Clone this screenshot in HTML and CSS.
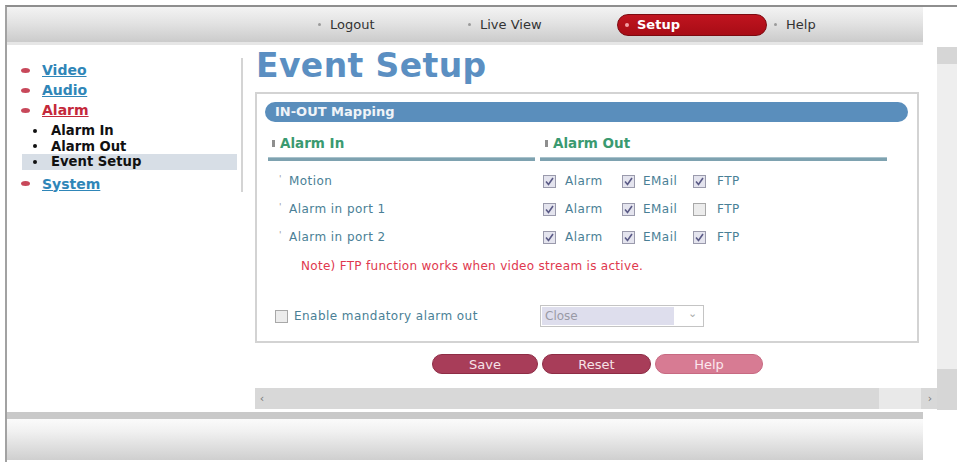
FILE: index.html
```html
<!DOCTYPE html>
<html>
<head>
<meta charset="utf-8">
<link rel="stylesheet" href="styles.css">
</head>
<body>
<div class="frame">
  <div class="nav">
    <div class="nav-item w150"><span class="dot"></span>Logout</div>
    <div class="nav-item w149"><span class="dot"></span>Live View</div>
    <div class="nav-item active"><span class="dot"></span>Setup</div>
    <div class="nav-item help"><span class="dot"></span>Help</div>
  </div>
  <div class="nav-sep"></div>
  <div class="middle">
    <div class="sidebar">
      <div class="menu">
        <div class="menu-top"><span class="oval"></span><a class="lnk">Video</a></div>
        <div class="menu-top"><span class="oval"></span><a class="lnk">Audio</a></div>
        <div class="menu-top"><span class="oval"></span><a class="lnk red">Alarm</a></div>
        <div class="sub">
          <div class="sub-item"><span class="sdot"></span>Alarm In</div>
          <div class="sub-item"><span class="sdot"></span>Alarm Out</div>
          <div class="sub-item sel"><span class="sdot"></span>Event Setup</div>
        </div>
        <div class="menu-top sys"><span class="oval"></span><a class="lnk">System</a></div>
      </div>
    </div>
    <div class="content-frame">
      <div class="page">
        <h1 class="title">Event Setup</h1>
        <div class="panel">
          <div class="panel-head">IN-OUT Mapping</div>
          <div class="grid">
            <div class="col-head"><span class="sq"></span>Alarm In</div>
            <div class="col-head"><span class="sq"></span>Alarm Out</div>
            <div class="bar"></div>
            <div class="bar"></div>

            <div class="row-label"><span class="tdot">'</span>Motion</div>
            <div class="row-out">
              <span class="opt o1"><svg class="cb" viewBox="0 0 13 13"><rect x="0.5" y="0.5" width="12" height="12" class="cbr"/><path d="M3 6.5 L5.5 9.5 L10 3" class="chk"/></svg>Alarm</span>
              <span class="opt o2"><svg class="cb" viewBox="0 0 13 13"><rect x="0.5" y="0.5" width="12" height="12" class="cbr"/><path d="M3 6.5 L5.5 9.5 L10 3" class="chk"/></svg>EMail</span>
              <span class="opt"><svg class="cb" viewBox="0 0 13 13"><rect x="0.5" y="0.5" width="12" height="12" class="cbr"/><path d="M3 6.5 L5.5 9.5 L10 3" class="chk"/></svg>FTP</span>
            </div>

            <div class="row-label"><span class="tdot">'</span>Alarm in port 1</div>
            <div class="row-out">
              <span class="opt o1"><svg class="cb" viewBox="0 0 13 13"><rect x="0.5" y="0.5" width="12" height="12" class="cbr"/><path d="M3 6.5 L5.5 9.5 L10 3" class="chk"/></svg>Alarm</span>
              <span class="opt o2"><svg class="cb" viewBox="0 0 13 13"><rect x="0.5" y="0.5" width="12" height="12" class="cbr"/><path d="M3 6.5 L5.5 9.5 L10 3" class="chk"/></svg>EMail</span>
              <span class="opt"><svg class="cb" viewBox="0 0 13 13"><rect x="0.5" y="0.5" width="12" height="12" class="cbr off"/></svg>FTP</span>
            </div>

            <div class="row-label"><span class="tdot">'</span>Alarm in port 2</div>
            <div class="row-out">
              <span class="opt o1"><svg class="cb" viewBox="0 0 13 13"><rect x="0.5" y="0.5" width="12" height="12" class="cbr"/><path d="M3 6.5 L5.5 9.5 L10 3" class="chk"/></svg>Alarm</span>
              <span class="opt o2"><svg class="cb" viewBox="0 0 13 13"><rect x="0.5" y="0.5" width="12" height="12" class="cbr"/><path d="M3 6.5 L5.5 9.5 L10 3" class="chk"/></svg>EMail</span>
              <span class="opt"><svg class="cb" viewBox="0 0 13 13"><rect x="0.5" y="0.5" width="12" height="12" class="cbr"/><path d="M3 6.5 L5.5 9.5 L10 3" class="chk"/></svg>FTP</span>
            </div>

            <div class="note">Note) FTP function works when video stream is active.</div>

            <div class="enable"><svg class="cb" viewBox="0 0 13 13"><rect x="0.5" y="0.5" width="12" height="12" class="cbr off"/></svg>Enable mandatory alarm out</div>
            <div class="select-cell">
              <div class="select"><span class="sel-val">Close</span><span class="sel-arrow">⌄</span></div>
            </div>
          </div>
        </div>
        <div class="buttons">
          <span class="btn b-save">Save</span>
          <span class="btn b-reset">Reset</span>
          <span class="btn b-help">Help</span>
        </div>
      </div>
      <div class="hscroll">
        <span class="arr">‹</span>
        <span class="htrack"></span>
        <span class="hthumb"></span>
        <span class="arr">›</span>
      </div>
    </div>
    <div class="vscroll">
      <div class="vtop"></div>
      <div class="vtrack"></div>
      <div class="vbot"></div>
    </div>
  </div>
  <div class="bottom-line"></div>
  <div class="bottom-bar"></div>
</div>
</body>
</html>
```

FILE: styles.css
```css
* { box-sizing: border-box; }
html, body { margin: 0; padding: 0; background: #fff; }
body { font-family: "DejaVu Sans", Verdana, sans-serif; width: 957px; height: 462px; overflow: hidden; }

.frame {
  margin: 5px 0 0 5px;
  border-top: 2px solid #8e8e8e;
  border-left: 2px solid #a2a2a2;
  height: 457px;
  display: flex;
  flex-direction: column;
}

/* top navigation */
.nav {
  width: 916px;
  height: 35px;
  flex: none;
  background: linear-gradient(#f3f3f3, #e3e3e3 45%, #cbcbcb);
  display: flex;
  align-items: center;
  padding-left: 311px;
  font-size: 13px;
  color: #333;
}
.nav-item { display: flex; align-items: center; height: 22px; }
.nav-item .dot { width: 3px; height: 3px; background: #9a9a9a; border-radius: 50%; margin-right: 9px; }
.w150 { width: 150px; }
.w149 { width: 149px; }
.nav-item.active {
  width: 150px;
  background: linear-gradient(#c0141f, #a80c16);
  border: 1px solid #7c0a10;
  border-radius: 11px;
  color: #fff;
  font-weight: bold;
  padding-left: 7px;
}
.nav-item.active .dot { background: #f2a0a6; margin-right: 8px; width: 4px; height: 4px; }
.nav-item.help { margin-left: 7px; }

.nav-sep { width: 916px; height: 3px; background: #e6e6e6; flex: none; }

/* middle */
.middle { display: flex; height: 366px; flex: none; }
.sidebar { width: 236px; flex: none; }
.menu {
  margin-top: 13px;
  height: 134px;
  border-right: 2px solid #d4d4d4;
  padding-top: 2px;
}
.menu-top { display: flex; align-items: center; height: 20px; padding-left: 14px; font-size: 14px; font-weight: bold; }
.menu-top.sys { margin-top: 4px; }
.oval {
  width: 9px; height: 5px; border-radius: 50%;
  background: #c8485a;
  margin-right: 12px;
}
.lnk { color: #2f86b8; text-decoration: underline; }
.lnk.red { color: #c4283a; }
.sub { margin-top: 3px; }
.sub-item {
  display: flex; align-items: center;
  height: 15.5px;
  margin-left: 15px; width: 215px;
  padding-left: 11px;
  font-size: 13.2px; font-weight: bold; color: #111;
}
.sub-item.sel { background: #d7dee6; }
.sdot { width: 4px; height: 4px; border-radius: 50%; background: #111; margin-right: 14px; }

.content-frame { width: 694px; flex: none; display: flex; flex-direction: column; }
.page { flex: 1; padding-left: 12px; }
.title {
  margin: 3px 0 0 1px;
  font-size: 33px; line-height: 36px;
  letter-spacing: 0.4px;
  font-weight: bold;
  color: #5b8fc2;
}
.panel {
  margin-top: 8px;
  width: 664px; height: 251px;
  border: 2px solid #d3d3d3;
  padding: 8px 9px 0 8px;
}
.panel-head {
  height: 20px;
  border-radius: 10px;
  background: #5a8ebc;
  color: #f0f4f8;
  font-size: 13px; font-weight: bold;
  line-height: 20px;
  padding-left: 10px;
}
.grid {
  display: grid;
  grid-template-columns: 267px 347px;
  column-gap: 5px;
  margin-left: 3px;
}
.col-head {
  margin-top: 13px; height: 16px;
  display: flex; align-items: center;
  font-size: 13.5px; font-weight: bold; color: #3a9a70;
}
.col-head:nth-child(2) { padding-left: 5px; }
.col-head .sq { width: 3px; height: 7px; background: #8e8e8e; margin: 0 5px 0 4px; }
.col-head:nth-child(2) .sq { margin-left: 0; }
.bar {
  margin-top: 6px; height: 4px;
  background: #7ea2b0;
  border-top: 1px solid #a9c2cb;
  margin-bottom: 6px;
}
.row-label, .row-out { height: 28px; display: flex; align-items: center; font-size: 12px; letter-spacing: 0.45px; color: #4a7f96; }
.row-label { padding-left: 11px; }
.tdot { color: #9a9a9a; font-size: 9px; width: 10px; margin-top: -4px; }
.row-out { padding-left: 3px; }
.opt { display: flex; align-items: center; }
.o1 { width: 79px; }
.o2 { width: 71px; }
.cb { width: 13px; height: 13px; margin-right: 9px; flex: none; }
.o2 .cb { margin-right: 8px; }
.opt:last-child .cb { margin-right: 11px; }
.cbr { fill: #e4e4ee; stroke: #9a9aac; stroke-width: 1; }
.cbr.off { fill: #ececec; stroke: #a8a8a8; }
.chk { fill: none; stroke: #5a5a86; stroke-width: 1.6; }
.note {
  grid-column: 1 / 3;
  margin-top: 7px;
  height: 16px; line-height: 16px;
  padding-left: 33px;
  font-size: 12px; letter-spacing: 0.3px;
  color: #e0384e;
}
.enable {
  margin-top: 31px;
  height: 22px;
  display: flex; align-items: center;
  padding-left: 7px;
  font-size: 12px; letter-spacing: 0.45px; color: #4a7f96;
}
.enable .cb { margin-right: 6px; }
.select-cell { margin-top: 31px; }
.select {
  width: 164px; height: 22px;
  border: 1px solid #c4c4c4;
  display: flex; align-items: center;
  background: #fff;
  padding: 1px;
}
.sel-val {
  flex: 1; height: 18px;
  background: #dedeed;
  color: #9a9aa6;
  font-size: 12px; line-height: 18px;
  padding-left: 3px;
  margin-right: 14px;
}
.sel-arrow { color: #aaa; font-size: 11px; width: 14px; margin-top: -6px; }

.buttons { display: flex; gap: 4px; margin: 11px 0 0 177px; }
.btn {
  height: 20px; border-radius: 10px;
  display: flex; align-items: center; justify-content: center;
  font-size: 13px; color: #f6e2e7;
}
.b-save { width: 106px; background: #a83d59; border: 1px solid #8e2d46; }
.b-reset { width: 109px; background: #a83d59; border: 1px solid #8e2d46; }
.b-help { width: 108px; background: #d77b93; border: 1px solid #c76a82; color: #fbe8ee; }

.hscroll {
  flex: none;
  height: 21px;
  margin: 0 0 2px 12px;
  background: #d8d8d8;
  display: flex; align-items: center;
  color: #777; font-size: 11px;
}
.hscroll .arr { width: 14px; text-align: center; }
.htrack { flex: 1; }
.hthumb { width: 42px; height: 21px; background: #e9e9e9; margin-right: 2px; }

.vscroll { width: 20px; flex: none; margin-top: 2px; height: 363px; display: flex; flex-direction: column; }
.vtop { height: 17px; background: #d6d6d6; }
.vtrack { flex: 1; background: #eeeeee; }
.vbot { height: 41px; background: #d6d6d6; }

.bottom-line { width: 916px; height: 7px; margin-top: 1px; background: #c9c9c9; flex: none; }
.bottom-bar { width: 916px; height: 41px; flex: none; background: linear-gradient(#fbfbfb, #f1f1f1 30%, #cfcfcf); }
```
